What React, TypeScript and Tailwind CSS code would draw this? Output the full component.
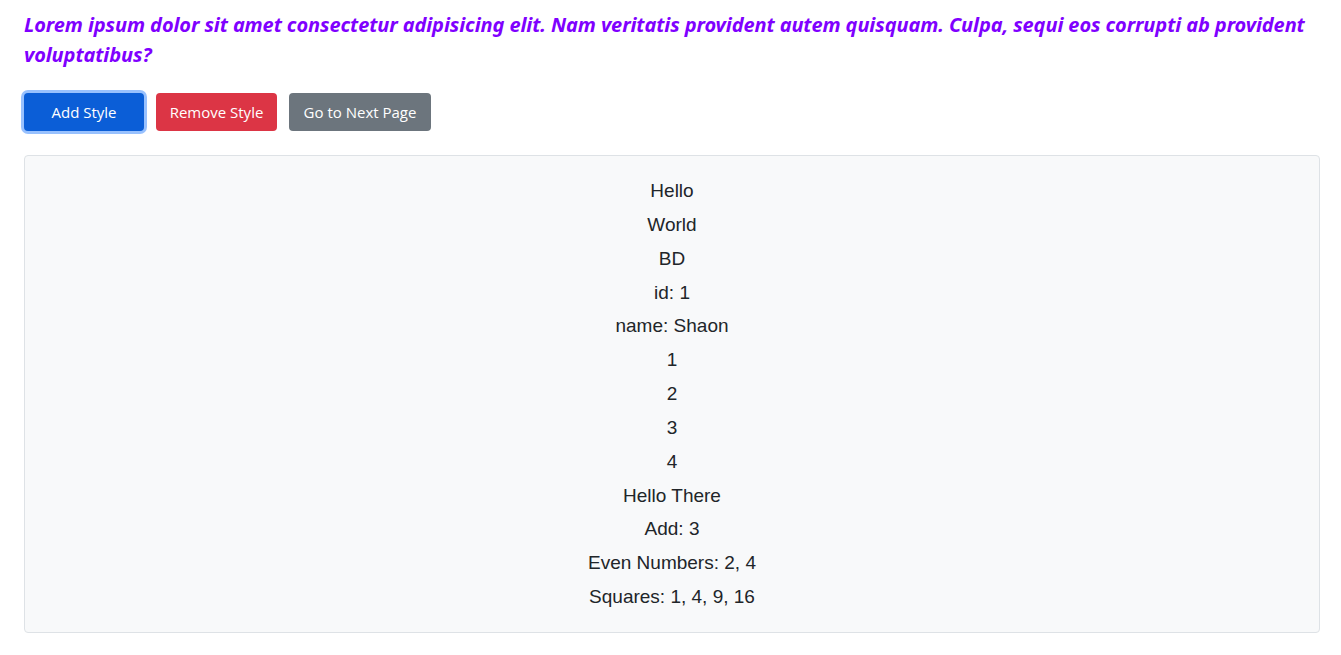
import React from 'react';

const lines = [
  'Hello',
  'World',
  'BD',
  'id: 1',
  'name: Shaon',
  '1',
  '2',
  '3',
  '4',
  'Hello There',
  'Add: 3',
  'Even Numbers: 2, 4',
  'Squares: 1, 4, 9, 16',
];

export default function App() {
  return (
    <div className="min-h-screen bg-white pl-6 pr-[21px] pt-[10px] pb-6">
      <h1 className="text-[20px] leading-[30px] font-bold italic text-[#7f00ff] font-['Noto_Sans',sans-serif] tracking-[-0.1px]">
        Lorem ipsum dolor sit amet consectetur adipisicing elit. Nam veritatis provident autem quisquam. Culpa, sequi eos
        corrupti ab provident voluptatibus?
      </h1>

      <div className="mt-[23px] flex items-center gap-3 font-['Open_Sans',sans-serif] text-[15px] text-white">
        <button className="h-[38px] w-[120px] rounded-[4px] bg-[#0b5ed7] ring-[3px] ring-[#98c1fe]">
          Add Style
        </button>
        <button className="h-[38px] w-[121px] rounded-[4px] bg-[#dc3545]">Remove Style</button>
        <button className="h-[38px] w-[142px] rounded-[4px] bg-[#6c757d]">Go to Next Page</button>
      </div>

      <div className="mt-6 rounded-[4px] border border-[#dee2e6] bg-[#f8f9fa] pt-[18px] pb-[18px] text-center font-['Liberation_Sans',Arial,sans-serif] text-[19px] leading-[33.84px] text-[#212529]">
        {lines.map((l, i) => (
          <div key={i}>{l}</div>
        ))}
      </div>
    </div>
  );
}
